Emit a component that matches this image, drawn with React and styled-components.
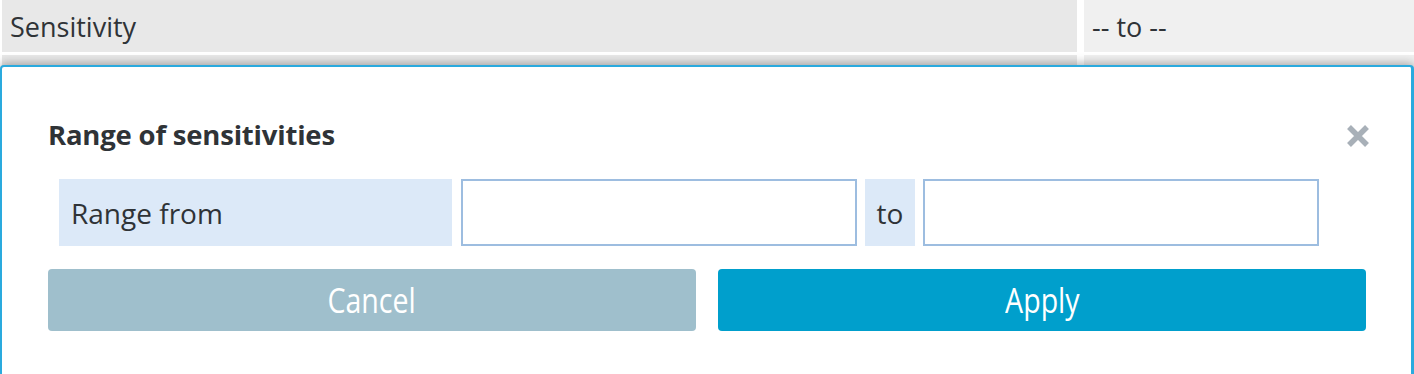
import React from "react";
import styled, { createGlobalStyle } from "styled-components";

const Global = createGlobalStyle`
  html, body { margin: 0; padding: 0; background: #ffffff; }
  body { font-family: "Open Sans", "Noto Sans", sans-serif; color: #2f3337; overflow: hidden; }
  * { box-sizing: border-box; }
`;

const Page = styled.div`
  position: relative;
  width: 1414px;
  height: 374px;
  overflow: hidden;
`;

const Table = styled.div`
  display: grid;
  grid-template-columns: 1075px 1fr;
  grid-auto-rows: 52px;
  column-gap: 7px;
  row-gap: 3px;
  padding-left: 2px;
`;

const Cell = styled.div`
  background: ${(p) => (p.$light ? "#f0f0f0" : "#e8e8e8")};
  display: flex;
  align-items: center;
  padding-left: 8px;
  font-size: 27px;
  color: #2f3337;
`;

const Modal = styled.div`
  position: absolute;
  top: 65px;
  left: 0;
  width: 1414px;
  height: 340px;
  background: #ffffff;
  border: 2px solid #2aaade;
  border-right-width: 3px;
  border-radius: 4px;
  box-shadow: 0 -2px 10px rgba(0, 0, 0, 0.3);
  padding: 46px 45px 0 46px;
`;

const Header = styled.div`
  display: flex;
  align-items: center;
  justify-content: space-between;
  height: 42px;
`;

const Title = styled.h2`
  margin: 0;
  font-size: 27.5px;
  font-weight: 700;
  color: #2f3337;
  letter-spacing: -0.2px;
`;

const Close = styled.button`
  border: 0;
  background: none;
  padding: 0;
  width: 28px;
  height: 28px;
  margin-right: -6px;
  margin-top: 4px;
  display: flex;
  align-items: center;
  justify-content: center;
  cursor: pointer;
`;

const RangeRow = styled.div`
  display: flex;
  gap: 8px;
  margin: 24px 47px 0 11px;
  height: 67px;
`;

const Label = styled.div`
  background: #dce9f8;
  display: flex;
  align-items: center;
  padding: 0 ${(p) => (p.$tight ? "0" : "12px")};
  justify-content: ${(p) => (p.$tight ? "center" : "flex-start")};
  width: ${(p) => p.$w}px;
  flex: none;
  font-size: 28px;
  color: #2f3337;
  margin-right: ${(p) => (p.$tight ? "0" : "1px")};
`;

const Input = styled.input`
  width: 396px;
  flex: none;
  height: 100%;
  border: 2px solid #9dbde0;
  background: #fff;
  font-size: 24px;
  font-family: inherit;
  padding: 0 10px;
  outline: none;
`;

const Buttons = styled.div`
  display: grid;
  grid-template-columns: 1fr 1fr;
  column-gap: 22px;
  margin-top: 23px;
`;

const Button = styled.button`
  height: 62px;
  border: 0;
  border-radius: 4px;
  background: ${(p) => (p.$primary ? "#009fcc" : "#9fbfcc")};
  color: #ffffff;
  font-family: "Open Sans", "Noto Sans", sans-serif;
  font-size: 34px;
  cursor: pointer;
  padding: 0;
  span { display: inline-block; transform: scaleX(0.84); }
`;

export default function App() {
  return (
    <Page>
      <Global />
      <Table>
        <Cell>Sensitivity</Cell>
        <Cell $light>-- to --</Cell>
        <Cell />
        <Cell $light />
      </Table>
      <Modal>
        <Header>
          <Title>Range of sensitivities</Title>
          <Close aria-label="Close">
            <svg width="24" height="24" viewBox="0 0 24 24">
              <path d="M3 3 L21 21 M21 3 L3 21" stroke="#a8b0b8" strokeWidth="5.5" />
            </svg>
          </Close>
        </Header>
        <RangeRow>
          <Label $w={393}>Range from</Label>
          <Input />
          <Label $w={50} $tight>to</Label>
          <Input />
        </RangeRow>
        <Buttons>
          <Button><span>Cancel</span></Button>
          <Button $primary><span>Apply</span></Button>
        </Buttons>
      </Modal>
    </Page>
  );
}
